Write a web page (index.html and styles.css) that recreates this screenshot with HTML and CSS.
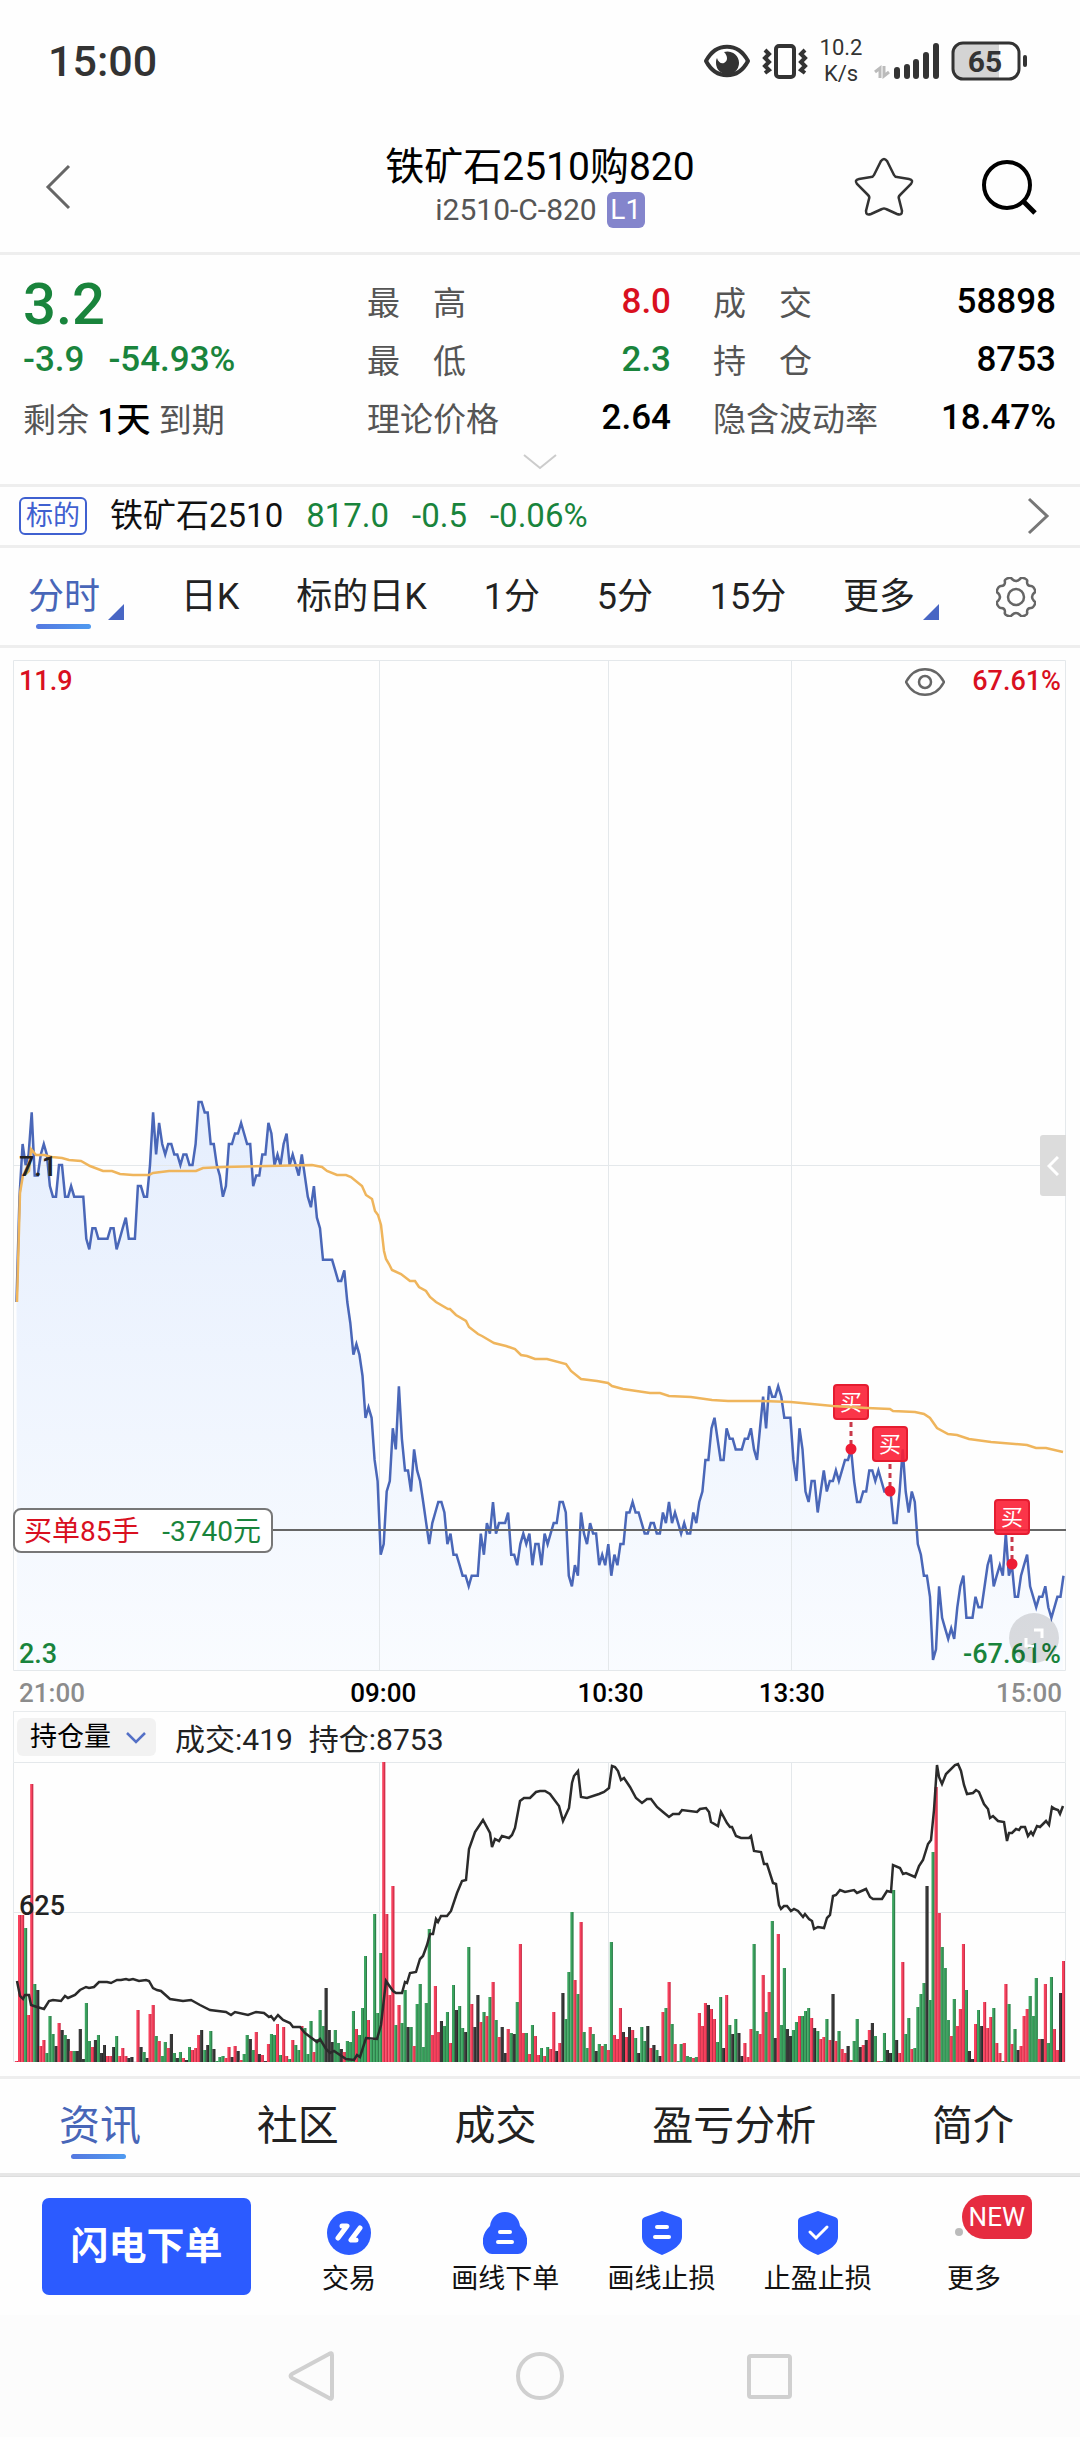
FILE: index.html
```html
<!DOCTYPE html>
<html lang="zh-CN">
<head>
    <meta charset="UTF-8">
    <meta name="viewport" content="width=device-width, initial-scale=1.0">
    <title>铁矿石2510购820</title>
    <link rel="stylesheet" href="styles.css">
</head>
<body>
    <div class="status-bar">
        <span class="clock">15:00</span>
        <div class="status-icons">
            <svg class="icon-eye" width="48" height="36" viewBox="0 0 48 36">
                <path d="M3 18C13 -1 35 -1 45 18C35 37 13 37 3 18Z" fill="none" stroke="#333" stroke-width="4" stroke-linejoin="round"/>
                <path d="M21 9a11.500 11.500 0 1 1-8 11c0-2 0-3 1-5c1 4 4 6 7 5c4-2 4-7 0-11z" fill="#333"/>
            </svg>
            <svg class="icon-vibrate" width="46" height="36" viewBox="0 0 46 36">
                <rect x="14" y="3" width="18" height="31" rx="3" fill="none" stroke="#333" stroke-width="4"/>
                <path d="M3 7l4 4-4 4 4 4-4 4 4 4-4 3M43 7l-4 4 4 4-4 4 4 4-4 4 4 3" fill="none" stroke="#333" stroke-width="4"/>
            </svg>
            <div class="net-speed"><span>10.2</span><span>K/s</span></div>
            <svg class="icon-signal" width="66" height="36" viewBox="0 0 66 36">
                <path d="M6 35V25L1 29M10 23v10l5-4" fill="none" stroke="#bbb" stroke-width="3"/>
                <path d="M23 27v6M33 24v9M42 19v14M52 12v21M62 3v30" stroke="#333" stroke-width="6" stroke-linecap="round"/>
            </svg>
            <svg class="icon-battery" width="77" height="40" viewBox="0 0 77 40">
                <path d="M11 3H48V37H11Q3 37 3 29V11Q3 3 11 3Z" fill="#d4d4d4"/>
                <rect x="2" y="2" width="66" height="36" rx="10" fill="none" stroke="#333" stroke-width="3"/>
                <path d="M74 16v8" stroke="#333" stroke-width="4" stroke-linecap="round"/>
                <text x="34" y="31" text-anchor="middle" class="battery-text">65</text>
            </svg>
        </div>
    </div>

    <header class="header">
        <button class="icon-btn back" aria-label="返回">
            <svg width="26" height="46" viewBox="0 0 26 46"><path d="M24 2L3 23l21 21" fill="none" stroke="#666" stroke-width="3"/></svg>
        </button>
        <div class="header-title">
            <h1>铁矿石2510购820</h1>
            <p><span>i2510-C-820</span><span class="level">L1</span></p>
        </div>
        <div class="header-actions">
            <button class="icon-btn" aria-label="自选">
                <svg width="60" height="60" viewBox="0 0 60 60"><path d="M27 4q3-4 6 0l7 14q1 2 3 2l12 2q5 1 2 5L46 38q-2 2-1 4l3 12q0 5-5 3L32 52q-2-1-4 0l-11 5q-5 2-5-3l3-12q1-2-1-4L3 27q-3-4 2-5l12-2q2 0 3-2z" fill="none" stroke="#333" stroke-width="2.500"/></svg>
            </button>
            <button class="icon-btn" aria-label="搜索">
                <svg width="58" height="58" viewBox="0 0 58 58"><circle cx="27" cy="27" r="23" fill="none" stroke="#000" stroke-width="4"/><path d="M43 43l12 12" stroke="#000" stroke-width="5"/></svg>
            </button>
        </div>
    </header>

    <section class="quote">
        <div class="quote-grid">
            <div class="last down">3.2</div>
            <div class="label">最　高</div><div class="value up">8.0</div>
            <div class="label">成　交</div><div class="value">58898</div>

            <div class="change down"><span>-3.9</span><span>-54.93%</span></div>
            <div class="label">最　低</div><div class="value down">2.3</div>
            <div class="label">持　仓</div><div class="value">8753</div>

            <div class="label expire">剩余 <b>1天</b> 到期</div>
            <div class="label">理论价格</div><div class="value">2.64</div>
            <div class="label">隐含波动率</div><div class="value">18.47%</div>
        </div>
        <button class="icon-btn expand-quote" aria-label="展开">
            <svg width="34" height="16" viewBox="0 0 34 16"><path d="M1 1l16 13L33 1" fill="none" stroke="#ccc" stroke-width="2"/></svg>
        </button>
    </section>

    <a class="underlying" href="#">
        <span class="tag">标的</span>
        <span class="name">铁矿石2510</span>
        <span class="down">817.0</span>
        <span class="down">-0.5</span>
        <span class="down">-0.06%</span>
        <svg class="arrow" width="24" height="38" viewBox="0 0 24 38"><path d="M2 2l18 17L2 36" fill="none" stroke="#777" stroke-width="3"/></svg>
    </a>

    <nav class="period-tabs">
        <button class="tab active has-menu">分时</button>
        <button class="tab">日K</button>
        <button class="tab">标的日K</button>
        <button class="tab">1分</button>
        <button class="tab">5分</button>
        <button class="tab">15分</button>
        <button class="tab has-menu">更多</button>
        <button class="icon-btn" aria-label="设置">
            <svg width="40" height="40" viewBox="0 0 40 40" fill="none" stroke="#666" stroke-width="2.500">
                <circle cx="20" cy="20" r="8"/>
                <path d="M11 1.500Q15 0 16 2Q20 6 24 2Q25 0 29 1.500Q32 3 31 5Q31 9 35 9Q37 9 38.500 12Q40 15 38 16Q34 20 38 24Q40 25 38.500 28Q37 31 35 31Q31 31 31 35Q32 37 29 38.500Q25 40 24 38Q20 34 16 38Q15 40 11 38.500Q8 37 9 35Q9 31 5 31Q3 31 1.500 28Q0 25 2 24Q6 20 2 16Q0 15 1.500 12Q3 9 5 9Q9 9 9 5Q8 3 11 1.500Z"/>
            </svg>
        </button>
    </nav>

    <main class="charts">
        <div class="price-chart">
            <svg id="priceChart" class="plot" viewBox="13 660 1053 1011"></svg>
            <button class="icon-btn toggle-eye" aria-label="显示">
                <svg width="40" height="28" viewBox="0 0 40 28" fill="none" stroke="#666" stroke-width="2.500"><path d="M1 14C10 -3 30 -3 39 14C30 31 10 31 1 14Z"/><circle cx="20" cy="14" r="6"/></svg>
            </button>
            <button class="side-handle" aria-label="侧栏">
                <svg width="12" height="20" viewBox="0 0 12 20"><path d="M11 1L2 10l9 9" fill="none" stroke="#fff" stroke-width="3"/></svg>
            </button>
            <button class="fullscreen" aria-label="全屏">
                <svg width="20" height="20" viewBox="0 0 20 20"><path d="M10 2h8v8M2 10v8h8" fill="none" stroke="#fff" stroke-width="3"/></svg>
            </button>
        </div>
        <div class="time-axis">
            <span class="edge">21:00</span>
            <span class="t1">09:00</span>
            <span class="t2">10:30</span>
            <span class="t3">13:30</span>
            <span class="edge last-time">15:00</span>
        </div>
        <div class="volume-head">
            <label class="picker">
                <select aria-label="指标">
                    <option>持仓量</option>
                    <option>成交量</option>
                </select>
                <svg width="22" height="12" viewBox="0 0 22 12"><path d="M2 1l9 9 9-9" fill="none" stroke="#5470c6" stroke-width="2.500"/></svg>
            </label>
            <span>成交:419</span>
            <span>持仓:8753</span>
        </div>
        <svg id="volumeChart" class="plot" viewBox="13 1762 1053 300"></svg>
    </main>

    <nav class="info-tabs">
        <button class="tab active">资讯</button>
        <button class="tab">社区</button>
        <button class="tab">成交</button>
        <button class="tab">盈亏分析</button>
        <button class="tab">简介</button>
    </nav>

    <footer class="trade-bar">
        <button class="order-btn">闪电下单</button>
        <div class="actions">
            <button class="action">
                <svg width="44" height="44" viewBox="0 0 44 44"><circle cx="22" cy="22" r="22" fill="#2c5bff"/><path d="M11 27l9-12h-5M33 17l-9 12h5" fill="none" stroke="#fff" stroke-width="5" stroke-linecap="round" stroke-linejoin="round"/></svg>
                交易
            </button>
            <button class="action">
                <svg width="44" height="44" viewBox="0 0 44 44"><path d="M22 1c8 0 14 6 15 14c9 8 9 20 3 26q-2 2-5 2H9q-3 0-5-2C-2 35-2 23 7 15C8 7 14 1 22 1z" fill="#2c5bff"/><path d="M17 21h10M15 31h14" stroke="#fff" stroke-width="4" stroke-linecap="round"/></svg>
                画线下单
            </button>
            <button class="action">
                <svg width="44" height="44" viewBox="0 0 44 44"><path d="M22 0l17 6q3 1 3 4v16q0 10-20 18Q2 36 2 26V10q0-3 3-4z" fill="#2c5bff"/><path d="M17 16h10M15 26h14" stroke="#fff" stroke-width="4" stroke-linecap="round"/></svg>
                画线止损
            </button>
            <button class="action">
                <svg width="44" height="44" viewBox="0 0 44 44"><path d="M22 0l17 6q3 1 3 4v16q0 10-20 18Q2 36 2 26V10q0-3 3-4z" fill="#2c5bff"/><path d="M14 21l6 6 11-11" fill="none" stroke="#fff" stroke-width="3" stroke-linecap="round"/></svg>
                止盈止损
            </button>
            <button class="action">
                <svg width="44" height="44" viewBox="0 0 44 44"><circle cx="7" cy="21" r="4" fill="#bbb"/><circle cx="22" cy="21" r="4" fill="#bbb"/><circle cx="37" cy="21" r="4" fill="#bbb"/></svg>
                更多
                <span class="new">NEW</span>
            </button>
        </div>
    </footer>

    <div class="system-nav">
        <button class="icon-btn" aria-label="后退"><svg width="50" height="52" viewBox="0 0 50 52"><path d="M46 5v42q0 3-3 1L6 28q-3-2 0-4L43 4q3-2 3 1z" fill="none" stroke="#d0d0d0" stroke-width="4"/></svg></button>
        <button class="icon-btn" aria-label="主页"><svg width="50" height="52" viewBox="0 0 50 52"><circle cx="25" cy="26" r="22" fill="none" stroke="#d0d0d0" stroke-width="4"/></svg></button>
        <button class="icon-btn" aria-label="最近任务"><svg width="50" height="52" viewBox="0 0 50 52"><rect x="5" y="6" width="41" height="41" rx="2" fill="none" stroke="#d0d0d0" stroke-width="4"/></svg></button>
    </div>

    <script src="chart.js"></script>
</body>
</html>
```

FILE: styles.css
```css
* {
    box-sizing: border-box;
}
body {
    margin: 0;
    background: #fefefe;
    color: #222;
    font-family: Roboto, "Noto Sans CJK SC", sans-serif;
}
button {
    border: 0;
    padding: 0;
    background: none;
    color: inherit;
    font-family: inherit;
}
svg {
    display: block;
}
.icon-btn {
    display: block;
}
.up {
    color: #d9101f;
}
.down {
    color: #19843c;
}

/* status bar */
.status-bar {
    display: flex;
    justify-content: space-between;
    align-items: center;
    height: 122px;
    padding: 0 52px 0 48px;
    color: #333;
}
.clock {
    font-size: 43px;
    line-height: 50px;
    font-weight: 500;
}
.status-icons {
    display: flex;
    align-items: center;
}
.icon-vibrate {
    margin-left: 11px;
}
.net-speed {
    display: flex;
    flex-direction: column;
    width: 66px;
    text-align: center;
    font-size: 22px;
    line-height: 26px;
}
.icon-battery {
    margin-left: 11px;
}
.battery-text {
    font-size: 30px;
    font-weight: 700;
    fill: #333;
}

/* header */
.header {
    display: grid;
    grid-template-columns: 1fr auto 1fr;
    align-items: center;
    height: 133px;
    padding: 0 42px;
    border-bottom: 3px solid #eee;
}
.back {
    padding-left: 3px;
}
.header-title {
    text-align: center;
}
.header-title h1 {
    margin: 0;
    font-size: 39px;
    line-height: 50px;
    font-weight: 400;
    color: #000;
}
.header-title p {
    display: flex;
    justify-content: center;
    align-items: center;
    gap: 10px;
    margin: 0 0 4px;
    font-size: 30px;
    line-height: 36px;
    color: #555;
}
.level {
    width: 38px;
    border-radius: 6px;
    background: #8485cc;
    color: #fff;
    font-size: 28px;
}
.header-actions {
    display: flex;
    justify-content: flex-end;
    align-items: center;
    gap: 66px;
}

/* quote */
.quote {
    padding: 17px 24px 14px 23px;
    border-bottom: 3px solid #eee;
}
.quote-grid {
    display: grid;
    grid-template-columns: 344fr 150fr 154fr 215fr 170fr;
    grid-auto-rows: 58px;
    align-items: center;
}
.quote .label {
    font-size: 33px;
    color: #555;
    white-space: nowrap;
}
.quote .label:nth-child(5n+4) {
    padding-left: 42px;
}
.expire b {
    font-size: 34px;
    font-weight: 500;
    color: #000;
}
.value {
    text-align: right;
    font-size: 35px;
    font-weight: 500;
    color: #000;
}
.value.up {
    color: #d9101f;
}
.value.down {
    color: #19843c;
}
.last {
    padding-top: 6px;
    font-size: 58px;
    line-height: 58px;
    font-weight: 500;
}
.change {
    display: flex;
    gap: 24px;
    font-size: 35px;
    font-weight: 500;
}
.expand-quote {
    margin: 8px auto 0;
}

/* underlying */
.underlying {
    display: flex;
    align-items: center;
    gap: 23px;
    height: 61px;
    padding: 0 29px 0 19px;
    border-bottom: 3px solid #eee;
    font-size: 33px;
    line-height: 38px;
    text-decoration: none;
}
.underlying .tag {
    padding: 0 5px;
    border: 2px solid #3f60d0;
    border-radius: 6px;
    font-size: 27px;
    line-height: 34px;
    color: #3f60d0;
}
.underlying .name {
    color: #111;
}
.underlying .arrow {
    margin-left: auto;
}

/* tabs */
.period-tabs,
.info-tabs {
    display: flex;
    justify-content: space-between;
    align-items: center;
    border-bottom: 3px solid #eee;
}
.period-tabs {
    height: 100px;
    padding: 0 44px 0 28px;
}
.info-tabs {
    height: 100px;
    padding: 0 66px 0 59px;
    border-top: 3px solid #eee;
    border-bottom-color: #e6e6e6;
}
.tab {
    position: relative;
    font-size: 36px;
    line-height: 60px;
}
.info-tabs .tab {
    font-size: 41px;
}
.tab.active {
    color: #4866b8;
}
.tab.active::before {
    content: "";
    position: absolute;
    left: 8px;
    bottom: -2px;
    width: 55px;
    height: 5px;
    border-radius: 3px;
    background: linear-gradient(90deg, #5578e0, #4f9af0);
}
.info-tabs .tab.active::before {
    left: 12px;
    bottom: -3px;
}
.has-menu {
    padding-right: 24px;
}
.has-menu::after {
    content: "";
    position: absolute;
    right: 0;
    bottom: 7px;
    border: 8px solid #4866c4;
    border-top-color: transparent;
    border-left-color: transparent;
}

/* charts */
.charts {
    padding: 12px 14px 14px 13px;
}
.plot {
    width: 100%;
    height: auto;
    overflow: visible;
}
.price-chart {
    position: relative;
}
.grid {
    stroke: #e4e8eb;
    stroke-width: 1;
    fill: none;
}
.price-line {
    fill: none;
    stroke: #4a67b8;
    stroke-width: 2.500;
}
.avg-line {
    fill: none;
    stroke: #efb55c;
    stroke-width: 2.500;
}
.oi-line {
    fill: none;
    stroke: #2b2b2b;
    stroke-width: 2.500;
}
.axis-text {
    font-size: 27px;
    font-weight: 500;
    fill: #222;
}
.axis-text.up {
    fill: #d9101f;
}
.axis-text.down {
    fill: #19843c;
}
.order-line {
    stroke: #666;
    stroke-width: 2;
}
.order-box {
    fill: #fff;
    stroke: #777;
    stroke-width: 2;
}
.order-text {
    font-size: 28px;
}
.order-text.up {
    fill: #d9101f;
}
.order-text.down {
    fill: #19843c;
}
.buy-box {
    fill: #fb1f35;
    fill-opacity: 0.9;
    stroke: #e51c30;
    stroke-width: 2;
}
.buy-stem {
    stroke: #c8394a;
    stroke-width: 3;
    stroke-dasharray: 5 4;
}
.buy-dot {
    fill: #ee1b33;
}
.buy-text {
    font-size: 22px;
    fill: #fff;
}
.toggle-eye {
    position: absolute;
    top: 8px;
    right: 121px;
}
.side-handle {
    position: absolute;
    top: 475px;
    right: 0;
    display: flex;
    justify-content: center;
    align-items: center;
    width: 26px;
    height: 61px;
    border-radius: 3px 0 0 3px;
    background: #dcdcdc;
}
.fullscreen {
    position: absolute;
    right: 7px;
    bottom: 8px;
    display: flex;
    justify-content: center;
    align-items: center;
    width: 50px;
    height: 50px;
    border-radius: 50%;
    background: rgba(0, 0, 0, 0.13);
}
.time-axis {
    display: flex;
    justify-content: space-between;
    padding: 0 4px 0 6px;
    height: 40px;
    font-size: 26px;
    line-height: 44px;
    font-weight: 500;
    color: #000;
}
/* session marks sit under the 09:00, 10:30 and 13:30 grid lines */
.time-axis .t1 {
    margin-left: 214px;
}
.time-axis .t2 {
    margin-left: 110px;
}
.time-axis .t3 {
    margin-left: 64px;
}
.time-axis .last-time {
    margin-left: 120px;
}
.time-axis .edge {
    color: #8c8c8c;
}
.volume-head {
    display: flex;
    align-items: center;
    gap: 16px;
    height: 51px;
    padding: 0 3px;
    border: 1px solid #e8ebed;
    border-bottom: 0;
    font-size: 30px;
    color: #222;
}
.picker {
    position: relative;
    margin-right: 3px;
}
.picker select {
    width: 139px;
    height: 38px;
    padding: 0 0 0 13px;
    border: 0;
    border-radius: 6px;
    background: #f2f2f2;
    color: #000;
    font-family: inherit;
    font-size: 27px;
    appearance: none;
}
.picker svg {
    position: absolute;
    top: 14px;
    right: 9px;
    pointer-events: none;
}

/* trade bar */
.trade-bar {
    display: flex;
    align-items: center;
    gap: 20px;
    height: 139px;
    padding: 0 28px 0 42px;
    border-top: 1px solid #ddd;
}
.order-btn {
    width: 209px;
    height: 97px;
    border-radius: 7px;
    background: #2c5bff;
    color: #fff;
    font-size: 38px;
    line-height: 46px;
    font-weight: 700;
}
.actions {
    display: flex;
    flex: 1;
    padding-top: 16px;
}
.action {
    position: relative;
    display: flex;
    flex: 1;
    flex-direction: column;
    align-items: center;
    gap: 6px;
    font-size: 27px;
    line-height: 36px;
    color: #111;
    white-space: nowrap;
}
.new {
    position: absolute;
    top: -16px;
    left: 66px;
    width: 70px;
    border-radius: 22px 8px 8px 22px;
    background: #e62c40;
    color: #fff;
    font-size: 26px;
    line-height: 44px;
    text-align: center;
}
.system-nav {
    display: flex;
    justify-content: center;
    align-items: center;
    gap: 179px;
    height: 122px;
    background: #fcfcfc;
}
```

FILE: chart.js
```js
// one value per minute, in tenths
const prices = [
    58, 68, 73, 71, 72, 76, 70, 70, 72, 73, 72, 69, 68, 68, 71, 71, 68, 68, 69, 68,
    68, 68, 68, 64, 63, 65, 65, 64, 64, 64, 64, 65, 65, 63, 64, 65, 66, 64, 64, 64,
    69, 69, 68, 68, 71, 76, 72, 75, 73, 72, 73, 73, 72, 72, 71, 72, 72, 71, 71, 73,
    77, 77, 76, 76, 73, 73, 71, 70, 68, 69, 73, 73, 74, 74, 75, 74, 73, 73, 69, 70,
    70, 72, 72, 75, 74, 71, 72, 71, 73, 74, 71, 72, 71, 70, 72, 70, 68, 67, 69, 66,
    65, 62, 62, 62, 62, 61, 60, 60, 61, 58, 56, 53, 54, 53, 51, 47, 48, 47, 43, 41,
    34, 35, 40, 41, 46, 44, 50, 45, 42, 42, 40, 44, 42, 41, 39, 37, 35, 37, 38, 39,
    39, 38, 35, 36, 34, 34, 33, 32, 32, 31, 32, 32, 32, 36, 34, 37, 36, 39, 36, 37,
    37, 37, 38, 34, 34, 33, 35, 36, 35, 36, 33, 35, 35, 33, 36, 35, 36, 37, 37, 39,
    39, 38, 32, 31, 33, 32, 38, 36, 35, 37, 36, 36, 33, 34, 33, 35, 32, 34, 33, 35,
    35, 38, 38, 39, 38, 38, 37, 36, 36, 37, 37, 36, 36, 38, 37, 39, 37, 38, 37, 36,
    37, 36, 36, 38, 37, 39, 40, 43, 43, 46, 47, 45, 43, 43, 46, 45, 45, 44, 44, 44,
    45, 45, 46, 44, 43, 46, 49, 46, 50, 49, 49, 50, 49, 47, 47, 47, 43, 41, 46, 44,
    40, 39, 41, 41, 38, 40, 42, 40, 41, 41, 42, 41, 42, 43, 43, 44, 41, 39, 39, 40,
    40, 42, 42, 41, 42, 41, 40, 40, 40, 37, 37, 40, 44, 40, 38, 40, 39, 35, 34, 32,
    32, 30, 24, 25, 31, 28, 27, 26, 27, 26, 29, 31, 32, 28, 28, 28, 30, 29, 29, 31,
    33, 34, 31, 32, 33, 32, 36, 32, 33, 30, 30, 32, 33, 34, 31, 30, 29, 30, 30, 31,
    29, 28, 29, 30, 30, 32
];

// r = up, g = down, k = flat
const volumes = `
r1 r147 r147 g134 r47 r278 g78 k72 r16 r22 g9 g46 g28 k16 r39 k32 g27 k23 r11 g11
k11 k33 k3 g59 g21 r15 k22 g27 k9 k17 r6 r6 k15 g26 r6 r14 r6 k4 k5 k0
r52 k15 g10 k4 r48 r57 g26 r21 g6 g20 r14 k28 g9 k4 g10 r4 k2 g15 r12 r14
r27 k32 g12 k17 g31 k13 g1 g5 g6 r4 r15 k5 r16 k11 r2 g8 g27 k23 g12 r30
k8 r7 k1 r18 g28 g27 r38 g7 r35 r6 g3 r22 g17 g12 r36 g34 g8 g41 r10 g23
g52 g36 k74 k32 k20 g32 g19 k13 r10 g21 g20 g51 r33 g27 g54 g106 r42 g22 g148 g49
g109 r300 r148 r67 r176 g37 r57 g39 g72 k35 g35 r16 g58 g78 g15 g59 g133 r27 r76 r30
k41 g36 g50 r19 g77 k52 g56 g34 k30 g115 r58 k35 k67 r40 g50 r46 g65 r80 g42 r25
k35 k9 r33 g29 k28 g60 r118 r29 g29 r8 g37 r26 r7 g14 r6 g15 r13 r50 k11 r19
k69 g43 g90 g150 r82 g68 r140 g30 g14 r35 g28 k11 g18 r16 g18 r12 g120 r27 r23 r54
k30 r25 k35 r32 g24 k9 g35 g21 k36 r14 k17 g12 k6 r50 g54 r80 g38 r18 g1 g18
r19 g6 g5 r4 g5 r49 r36 r59 k57 r53 r43 g20 g65 k14 r67 g37 k28 g43 k29 k6
r19 r5 r33 g118 g31 r28 r87 g50 r70 g141 k24 r128 g37 g94 k33 k26 g32 g40 r46 g46
g51 g54 r44 k34 g31 r23 r25 g43 r22 k68 r21 g31 r13 r9 k16 r2 g21 g43 k15 r17
k22 r32 k39 g26 r1 g1 g29 k12 k9 g172 k22 r9 r100 g28 g44 r13 g14 g55 g68 g79
k176 g62 g210 r275 r149 g115 g94 g42 r26 g63 r36 r53 r118 g72 k11 k3 r38 g52 k36 r60
r34 r45 g54 r19 r9 g1 r78 g58 r18 g33 k12 r16 r46 r53 g66 g46 g84 r23 k23 r78
g19 g85 r33 r12 k69 r101`.trim().split(/\s+/);

const average = "17,1302 20,1193 23,1175 26,1174 29,1171 31,1149 36,1155 44,1155 52,1157 62,1158 69,1160 81,1161 90,1166 103,1171 112,1171 120,1174 133,1175 149,1175 153,1173 169,1171 196,1171 203,1168 224,1167 269,1166 312,1165 322,1167 327,1171 337,1175 346,1175 351,1177 362,1186 366,1195 372,1199 375,1211 378,1215 381,1225 384,1251 386,1259 389,1264 392,1270 401,1274 410,1281 415,1281 419,1287 426,1291 430,1297 436,1302 448,1309 450,1309 456,1315 466,1321 469,1327 478,1334 482,1336 494,1343 506,1346 515,1349 521,1355 527,1356 535,1359 547,1359 566,1364 571,1371 581,1379 597,1381 608,1383 612,1386 623,1389 650,1393 660,1393 669,1396 691,1397 712,1400 728,1401 760,1401 791,1402 812,1404 833,1406 867,1408 890,1409 893,1411 915,1412 924,1414 930,1418 937,1428 948,1434 957,1435 969,1439 991,1442 1027,1445 1036,1448 1046,1448 1063,1452";

const openInterest = "17,1981 20,1996 23,1999 25,1995 29,1995 31,2005 37,2007 44,2009 49,2001 53,2000 61,2001 65,1996 68,1998 75,1995 80,1990 86,1987 89,1988 94,1987 99,1982 107,1982 111,1983 117,1980 121,1980 126,1979 129,1980 133,1979 139,1981 146,1980 149,1981 153,1988 157,1990 161,1991 170,1999 183,2001 191,2000 200,2005 210,2010 226,2012 231,2015 235,2012 248,2015 256,2012 264,2013 269,2017 271,2016 274,2020 278,2015 283,2020 290,2023 293,2027 300,2027 305,2033 317,2042 320,2039 326,2049 330,2053 334,2051 346,2059 354,2060 357,2055 360,2057 366,2038 377,2039 381,2025 386,1981 393,1991 396,1993 402,1993 405,1982 407,1983 410,1973 416,1972 420,1959 423,1956 427,1945 430,1934 433,1934 436,1919 438,1922 441,1916 447,1916 451,1911 457,1893 462,1881 466,1880 469,1849 475,1832 483,1820 490,1833 492,1847 495,1839 499,1841 502,1836 509,1838 512,1835 515,1828 520,1801 524,1798 530,1798 536,1792 540,1791 545,1791 550,1794 559,1806 563,1821 569,1808 572,1783 574,1776 578,1771 581,1797 587,1798 599,1794 604,1792 609,1788 612,1766 615,1767 618,1771 621,1780 624,1778 630,1787 636,1798 642,1803 647,1799 651,1799 657,1807 663,1812 669,1817 673,1814 679,1814 682,1810 697,1812 700,1809 706,1808 709,1812 711,1822 718,1826 721,1812 727,1823 730,1827 732,1827 736,1836 741,1838 749,1838 751,1836 754,1851 761,1852 764,1864 767,1864 773,1883 776,1884 779,1905 781,1909 784,1906 787,1906 791,1911 794,1909 798,1911 803,1917 805,1914 809,1919 812,1921 814,1929 818,1927 824,1928 827,1918 830,1915 833,1896 836,1895 840,1890 845,1892 854,1890 857,1893 866,1889 870,1897 873,1899 882,1899 887,1891 891,1892 893,1865 900,1868 903,1874 906,1873 915,1877 919,1866 923,1860 928,1844 931,1840 934,1810 937,1765 939,1777 942,1784 946,1774 955,1765 958,1764 961,1771 964,1785 967,1794 973,1793 976,1790 979,1792 984,1804 988,1809 990,1818 993,1816 998,1821 1004,1822 1007,1841 1009,1833 1012,1833 1016,1829 1019,1830 1021,1827 1025,1827 1028,1836 1031,1832 1033,1835 1037,1826 1040,1827 1046,1821 1049,1825 1052,1807 1055,1809 1058,1810 1060,1814 1063,1806";

const buys = [[851, 1402, 1449], [890, 1444, 1491], [1012, 1517, 1564]];
const colors = { r: ["#f8415d", "#c2304a"], g: ["#3ba45f", "#2f7a4a"], k: ["#3a3a3a", "#2b2b2b"] };
const STEP = 1047 / (prices.length - 1);

function xAt(i) {
    return 16.5 + i * STEP;
}
function yAt(tenths) {
    return 1670.5 - (tenths - 23) * 10.53;
}
function grid(top, middle, bottom) {
    return `<path class="grid" d="M13.500 ${top}H1065.500V${bottom}H13.500ZM13.500 ${middle}H1065.500M379.500 ${top}V${bottom}M608.500 ${top}V${bottom}M791.500 ${top}V${bottom}"/>`;
}

function drawPrice() {
    const line = prices.map((p, i) => xAt(i).toFixed(1) + "," + yAt(p).toFixed(1)).join(" ");
    let html = `<defs><linearGradient id="fade" x1="0" y1="0" x2="0" y2="1">
        <stop offset="0" stop-color="#dfeafd" stop-opacity="0.8"/>
        <stop offset="1" stop-color="#f8fbff" stop-opacity="0.8"/>
    </linearGradient></defs>`;
    html += `<polygon points="17,1670 ${line} 1063,1670" fill="url(#fade)"/>`;
    html += grid(660.5, 1165.5, 1670.5);
    html += `<polyline class="price-line" points="${line}"/>`;
    html += `<path class="order-line" d="M272 1530H1066"/>`;
    buys.forEach(([x, box, dot]) => {
        html += `<rect class="buy-box" x="${x - 17}" y="${box - 17}" width="34" height="34" rx="3"/>
            <path class="buy-stem" d="M${x} ${box + 20}V${dot}"/>
            <circle class="buy-dot" cx="${x}" cy="${dot}" r="5.5"/>
            <text class="buy-text" x="${x}" y="${box + 8}" text-anchor="middle">买</text>`;
    });
    html += `<polyline class="avg-line" points="${average}"/>`;
    html += `<rect class="order-box" x="14" y="1509" width="258" height="43" rx="7"/>
        <text class="order-text up" x="24" y="1541">买单85手</text>
        <text class="order-text down" x="261" y="1541" text-anchor="end">-3740元</text>
        <text class="axis-text up" x="19" y="690">11.9</text>
        <text class="axis-text up" x="1061" y="690" text-anchor="end">67.61%</text>
        <text class="axis-text" x="19" y="1176">7.1</text>
        <text class="axis-text down" x="19" y="1663">2.3</text>
        <text class="axis-text down" x="1061" y="1663" text-anchor="end">-67.61%</text>`;
    document.getElementById("priceChart").innerHTML = html;
}

function drawVolume() {
    let html = grid(1762.5, 1912.5, 2061.5);
    volumes.forEach((v, i) => {
        const h = Number(v.slice(1));
        const [fill, edge] = colors[v[0]];
        const x = xAt(i) - 1.5;
        html += `<rect x="${x.toFixed(1)}" y="${2062 - h}" width="3" height="${h}" fill="${fill}"/>`;
        html += `<rect x="${(x + 2).toFixed(1)}" y="${2062 - h}" width="1" height="${h}" fill="${edge}"/>`;
    });
    html += `<polyline class="oi-line" points="${openInterest}"/>`;
    html += `<text class="axis-text" x="19" y="1915">625</text>`;
    document.getElementById("volumeChart").innerHTML = html;
}

drawPrice();
drawVolume();
```
